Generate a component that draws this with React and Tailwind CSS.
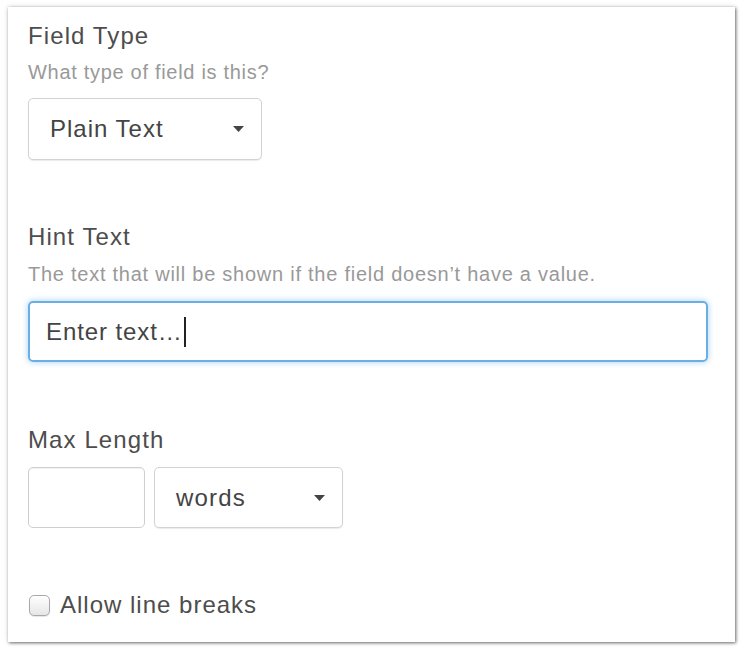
import { useState } from "react";

const Caret = () => (
  <svg width="11" height="6" viewBox="0 0 11 6" className="shrink-0">
    <path d="M0 0 L11 0 L5.5 6 Z" fill="#444" />
  </svg>
);

export default function App() {
  const [hint, setHint] = useState("Enter text…");
  const [lineBreaks, setLineBreaks] = useState(false);

  return (
    <div className="min-h-[652px] bg-white pt-[7px] pl-2 font-['Liberation_Sans',Arial,sans-serif]">
      <div className="w-[727px] h-[635px] bg-white shadow-[1px_1px_3px_rgba(0,0,0,0.55),0_0_6px_rgba(0,0,0,0.12)] pl-5 pt-[15px]">
        {/* Field type */}
        <div className="text-[24px] leading-[28px] tracking-[1.1px] text-[#4d4d4d]">Field Type</div>
        <div className="mt-[10px] text-[20px] leading-[24px] tracking-[0.7px] text-[#999]">What type of field is this?</div>
        <button className="mt-[14px] w-[234px] h-[62px] flex items-center justify-between pl-[21px] pr-[17px] border border-[#d3d3d3] rounded-[5px] bg-white shadow-[0_1px_1px_rgba(0,0,0,0.08)] text-[24px] tracking-[1px] text-[#444]">
          <span>Plain Text</span>
          <Caret />
        </button>

        {/* Hint text */}
        <div className="mt-[63px] text-[24px] leading-[28px] tracking-[1.1px] text-[#4d4d4d]">Hint Text</div>
        <div className="mt-[11px] text-[20px] leading-[24px] tracking-[0.75px] text-[#999]">
          The text that will be shown if the field doesn’t have a value.
        </div>
        <div className="mt-[15px] w-[680px] h-[61px] flex items-center px-[16px] border-2 border-[#6aafe3] rounded-[5px] shadow-[0_0_6px_rgba(102,175,233,0.6)] text-[24px] tracking-[0.9px] text-[#444]">
          <span>{hint}</span>
          <span className="ml-[1px] w-[2px] h-[30px] bg-[#222]" />
        </div>

        {/* Max length */}
        <div className="mt-[64px] text-[24px] leading-[28px] tracking-[1.1px] text-[#4d4d4d]">Max Length</div>
        <div className="mt-[13px] flex gap-[9px]">
          <div className="w-[117px] h-[61px] border border-[#cfcfcf] rounded-[5px] bg-white shadow-[inset_0_1px_1px_rgba(0,0,0,0.06)]" />
          <button className="w-[189px] h-[61px] flex items-center justify-between pl-[21px] pr-[17px] border border-[#d3d3d3] rounded-[5px] bg-white shadow-[0_1px_1px_rgba(0,0,0,0.08)] text-[24px] tracking-[1.2px] text-[#444]">
            <span>words</span>
            <Caret />
          </button>
        </div>

        {/* Allow line breaks */}
        <label className="mt-[63px] flex items-center gap-[10px] cursor-pointer">
          <span
            onClick={() => setLineBreaks(!lineBreaks)}
            className="ml-px w-[21px] h-[21px] rounded-[5px] border border-[#a9a9a9] bg-gradient-to-b from-white to-[#e6e6e6] shadow-[0_1px_1px_rgba(0,0,0,0.1)]"
          />
          <span className="text-[24px] leading-[28px] tracking-[1px] text-[#4d4d4d]">Allow line breaks</span>
        </label>
      </div>
    </div>
  );
}
